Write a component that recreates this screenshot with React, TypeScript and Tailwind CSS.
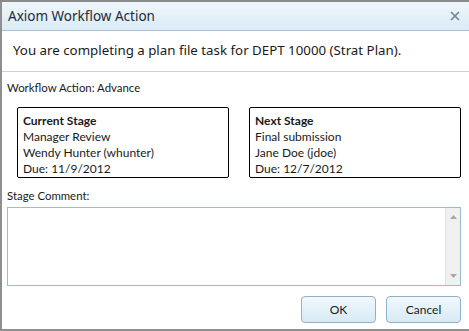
import React from "react";

function StageBox({ title, lines }: { title: string; lines: string[] }) {
  return (
    <div className="w-[212px] h-[71px] border border-black rounded-[2px] px-[5px] pt-[5px] text-[12px] leading-[16px] text-[#1a1a1a]">
      <div className="font-bold">{title}</div>
      {lines.map((l) => (
        <div key={l}>{l}</div>
      ))}
    </div>
  );
}

export default function App() {
  return (
    <div className="w-[469px] h-[331px] bg-[#8a8a8a] pt-[2px] overflow-hidden">
      <div className="h-[329px] bg-white border-l-2 border-b-2 border-[#8f8f8f] flex flex-col font-['Lato','Liberation_Sans',sans-serif]">
        {/* title bar */}
        <div className="h-[29px] shrink-0 flex items-center justify-between pl-[6px] pr-[8px] bg-gradient-to-b from-[#eef6fb] to-[#dcebf5] border-b border-[#a8c2d2]">
          <span className="font-['Noto_Sans',sans-serif] text-[13.5px] text-[#1d2b3a]">Axiom Workflow Action</span>
          <svg width="10" height="10" viewBox="0 0 10 10" className="mr-[1px]">
            <path d="M1 1 L9 9 M9 1 L1 9" stroke="#6a8599" strokeWidth="1.6" />
          </svg>
        </div>
        {/* message */}
        <div className="h-[41px] shrink-0 flex items-center pl-[11px] border-b border-[#cfcfcf] font-['Noto_Sans',sans-serif] text-[13.3px] text-[#1a1a1a]">
          You are completing a plan file task for DEPT 10000 (Strat Plan).
        </div>
        {/* body */}
        <div className="flex-1 flex flex-col pl-[5px] pr-[8px] text-[11.4px] text-[#1a1a1a]">
          <div className="mt-[8px] leading-[16px]">Workflow Action: Advance</div>
          <div className="mt-[11px] flex justify-between pl-[10px]">
            <StageBox title="Current Stage" lines={["Manager Review", "Wendy Hunter (whunter)", "Due: 11/9/2012"]} />
            <StageBox title="Next Stage" lines={["Final submission", "Jane Doe (jdoe)", "Due: 12/7/2012"]} />
          </div>
          <div className="mt-[10px] leading-[16px]">Stage Comment:</div>
          <div className="mt-[3px] h-[79px] border border-[#9bbccc] flex">
            <div className="flex-1" />
            <div className="w-[15px] bg-[#f0f0f0] border-l border-[#e4e4e4] flex flex-col justify-between items-center py-[7px]">
              <svg width="7" height="4" viewBox="0 0 7 4"><path d="M0 4 L3.5 0 L7 4 Z" fill="#a8a8a8" /></svg>
              <svg width="7" height="4" viewBox="0 0 7 4"><path d="M0 0 L3.5 4 L7 0 Z" fill="#a8a8a8" /></svg>
            </div>
          </div>
          <div className="mt-[10px] flex justify-end gap-[10px]">
            <button className="w-[75px] h-[27px] rounded-[4px] border border-[#90b2c6] bg-gradient-to-b from-[#f1f8fc] to-[#d7eaf4] text-[12px] text-[#1a1a1a]">OK</button>
            <button className="w-[75px] h-[27px] rounded-[4px] border border-[#90b2c6] bg-gradient-to-b from-[#f1f8fc] to-[#d7eaf4] text-[12px] text-[#1a1a1a]">Cancel</button>
          </div>
        </div>
      </div>
    </div>
  );
}
